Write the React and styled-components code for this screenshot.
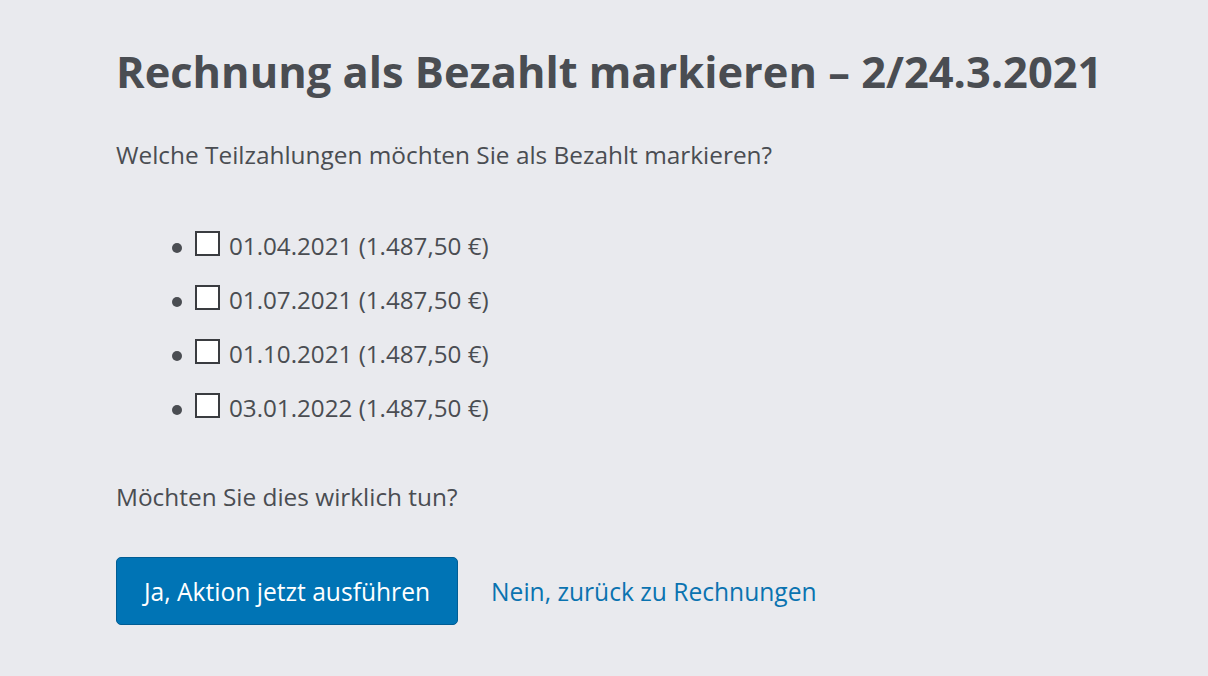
import React from "react";
import styled, { createGlobalStyle } from "styled-components";

const GlobalStyle = createGlobalStyle`
  html, body {
    margin: 0;
    padding: 0;
    background: #e9eaee;
  }
  body {
    font-family: "Open Sans", "Noto Sans", sans-serif;
    color: #4a4d52;
  }
`;

const Page = styled.div`
  min-height: 676px;
  box-sizing: border-box;
  padding: 40px 0 0 116px;
`;

const Title = styled.h1`
  margin: 0;
  font-size: 43.4px;
  line-height: 64px;
  font-weight: 700;
  color: #4a4d52;
`;

const Text = styled.p`
  margin: ${(p) => p.$top || 0}px 0 0;
  font-size: 24.4px;
  line-height: 34px;
`;

const List = styled.ul`
  margin: 57px 0 0;
  padding: 0 0 0 56px;
  list-style: none;
  display: flex;
  flex-direction: column;
  gap: 20px;
`;

const Item = styled.li`
  display: flex;
  align-items: center;
  font-size: 24.2px;
  line-height: 34px;

  &::before {
    content: "";
    width: 10px;
    height: 10px;
    border-radius: 50%;
    background: #4a4d52;
    margin-right: 13px;
    margin-top: 4px;
  }
`;

const Box = styled.span`
  width: 25px;
  height: 25px;
  box-sizing: border-box;
  border: 2px solid #3a3c40;
  background: #fff;
  margin: -6px 9px 0 0;
`;

const Actions = styled.div`
  display: flex;
  align-items: center;
  gap: 33px;
  margin-top: 43px;
`;

const Button = styled.button`
  height: 68px;
  padding: 0 27px;
  font-family: inherit;
  font-size: 24.6px;
  color: #fff;
  background: #0074b5;
  border: 1px solid #005d94;
  border-radius: 5px;
`;

const Link = styled.a`
  font-size: 24.6px;
  color: #0a73b0;
  text-decoration: none;
`;

const rows = ["01.04.2021", "01.07.2021", "01.10.2021", "03.01.2022"];

export default function App() {
  return (
    <Page>
      <GlobalStyle />
      <Title>Rechnung als Bezahlt markieren – 2/24.3.2021</Title>
      <Text $top={34}>Welche Teilzahlungen möchten Sie als Bezahlt markieren?</Text>
      <List>
        {rows.map((d) => (
          <Item key={d}>
            <Box />
            {d} (1.487,50 €)
          </Item>
        ))}
      </List>
      <Text $top={55}>Möchten Sie dies wirklich tun?</Text>
      <Actions>
        <Button>Ja, Aktion jetzt ausführen</Button>
        <Link href="#">Nein, zurück zu Rechnungen</Link>
      </Actions>
    </Page>
  );
}
